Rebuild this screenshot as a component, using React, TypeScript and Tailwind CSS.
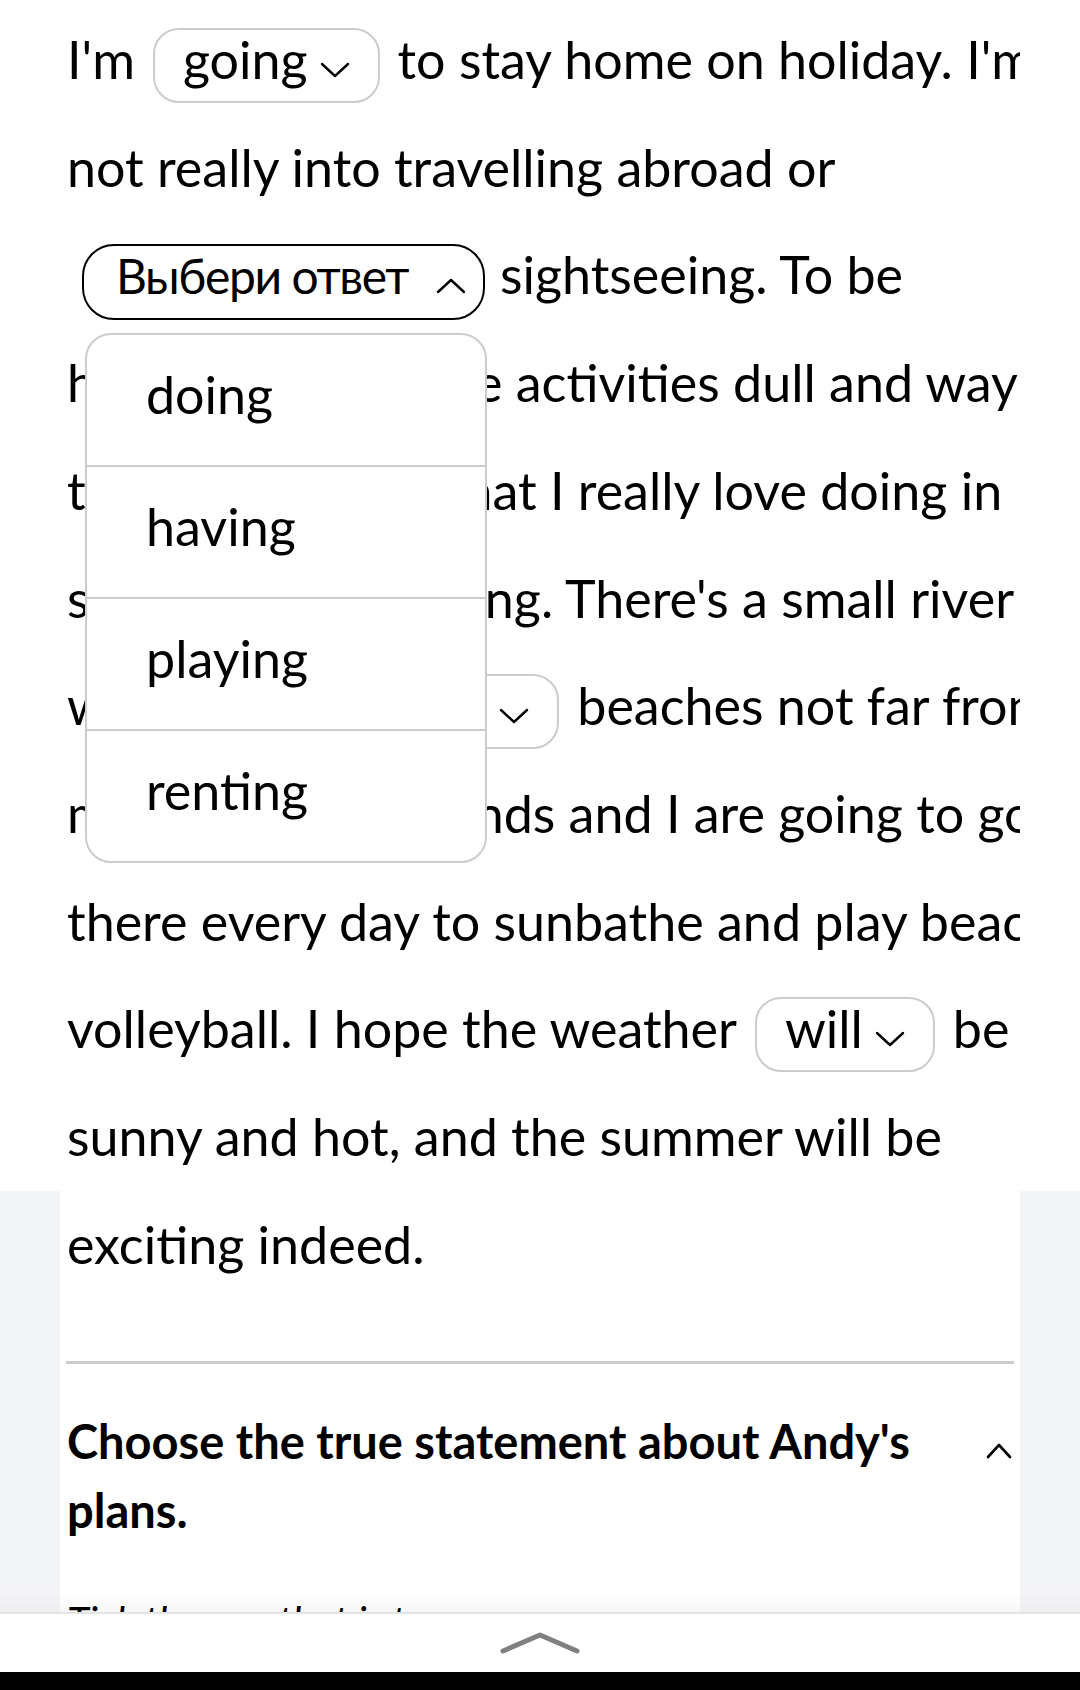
import React from 'react';

const OPTIONS = ['doing', 'having', 'playing', 'renting'];

function Chevron({ up = false }: { up?: boolean }) {
  return (
    <svg
      width="30"
      height="17"
      viewBox="0 0 30 17"
      fill="none"
      stroke="currentColor"
      strokeWidth="2.4"
      strokeLinecap="round"
      strokeLinejoin="round"
      className="shrink-0"
    >
      <polyline points={up ? '2,15 15,3 28,15' : '2,2 15,14 28,2'} />
    </svg>
  );
}

// filled-in gap: grey outlined pill with the chosen word
function Answer({ word, wide = false }: { word: string; wide?: boolean }) {
  return (
    <span
      className={
        wide
          ? 'mx-[18px] inline-flex h-[75px] items-baseline gap-[12px] rounded-[26px] border-2 border-[#cccccc] pl-[40px] pr-[28px] pt-[3px] align-baseline leading-none'
          : 'mx-[18px] inline-flex h-[75px] items-baseline gap-[12px] rounded-[26px] border-2 border-[#cccccc] px-[28px] pt-[3px] align-baseline leading-none'
      }
    >
      <span>{word}</span>
      <Chevron />
    </span>
  );
}

// open gap: black outlined select with its option list below
function OpenSelect() {
  return (
    <span className="relative mx-[15px] inline-block align-baseline leading-none">
      <span className="inline-flex h-[76px] w-[403px] items-baseline justify-between rounded-[32px] border-2 border-black pl-[32px] pr-[17px] pt-[6px]">
        <span className="text-[48px] tracking-[-1.4px]">Выбери ответ</span>
        <Chevron up />
      </span>
      <div className="absolute left-[3px] top-[89px] z-10 w-[402px] overflow-hidden rounded-[26px] border-2 border-[#cccccc] bg-white">
        {OPTIONS.map((o, i) => (
          <div
            key={o}
            className={i === 0 ? 'h-[130px] pl-[59px] pt-[33px]' : 'h-[132px] border-t-2 border-[#cccccc] pl-[59px] pt-[33px]'}
          >
            {o}
          </div>
        ))}
      </div>
    </span>
  );
}

function Line({ children }: { children: React.ReactNode }) {
  return <div className="whitespace-nowrap">{children}</div>;
}

export default function App() {
  return (
    <div className="relative h-[1690px] w-[1080px] overflow-hidden bg-white font-['Lato','Noto_Sans',sans-serif] text-black">
      {/* story text, upper part */}
      <section className="h-[1188px] bg-white pt-[6px]">
        <div className="ml-[60px] w-[960px] overflow-hidden pl-[7px] text-[52px] leading-[107.7px]">
          <Line>
            I'm<Answer word="going" />to stay home on holiday. I'm
          </Line>
          <Line>not really into travelling abroad or</Line>
          <Line>
            <OpenSelect />sightseeing. To be
          </Line>
          <Line>honest, I find these activities dull and way</Line>
          <Line>too expensive. What I really love doing in</Line>
          <Line>summer is swimming. There's a small river</Line>
          <Line>
            with<Answer word="spectacular" wide />beaches not far from
          </Line>
          <Line>my house. My friends and I are going to go</Line>
          <Line>there every day to sunbathe and play beach</Line>
          <Line>
            volleyball. I hope the weather<Answer word="will" />be
          </Line>
          <Line>sunny and hot, and the summer will be</Line>
        </div>
      </section>

      <section className="bg-[#f4f5f7]">
        <div className="ml-[60px] w-[960px] bg-white pb-[120px] pl-[7px]">
          <div className="mt-[3px] whitespace-nowrap text-[52px] leading-[107.7px]">exciting indeed.</div>

          <div className="mr-[6px] mt-[62px] h-[3px] -ml-px bg-[#cccccc]" />

          <div className="mt-[43px] flex items-start justify-between pr-[8px]">
            <h2 className="w-[900px] text-[47px] font-bold leading-[69px]">
              Choose the true statement about Andy's plans.
            </h2>
            <svg width="26" height="16" viewBox="0 0 26 16" fill="none" stroke="black" strokeWidth="2.6" strokeLinecap="round" strokeLinejoin="round" className="mt-[36px]">
              <polyline points="2,14 13,2 24,14" />
            </svg>
          </div>

          <p className="mt-[48px] text-[40px] italic leading-[56px]">Tick the one that is true.</p>
        </div>
      </section>

      {/* bottom sheet handle bar */}
      <div className="absolute inset-x-0 bottom-[18px]">
        <div className="h-[22px] bg-gradient-to-b from-transparent to-black/[0.03]" />
        <div className="flex h-[60px] items-center justify-center border-t-2 border-[#e4e4e4] bg-white">
          <svg width="82" height="24" viewBox="0 0 82 24" fill="none" stroke="#808080" strokeWidth="5" strokeLinecap="round" strokeLinejoin="round">
            <polyline points="4,20 41,4 78,20" />
          </svg>
        </div>
      </div>
      <div className="absolute inset-x-0 bottom-0 h-[18px] bg-black" />
    </div>
  );
}
